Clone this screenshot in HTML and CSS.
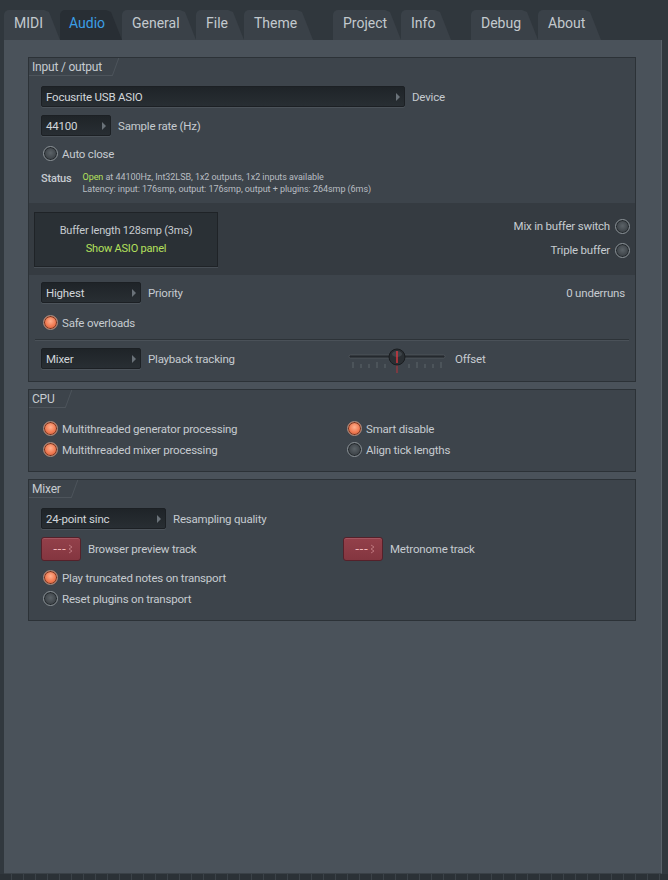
FILE: index.html
```html
<!DOCTYPE html>
<html lang="en">
<head>
  <meta charset="UTF-8" />
  <meta name="viewport" content="width=device-width, initial-scale=1.0" />
  <title>Settings - Audio</title>
  <link rel="stylesheet" href="styles.css">
</head>
<body>
  <div class="window">
    <!-- Tab bar -->
    <nav class="tabs">
      <div class="tab" style="width:56px">MIDI</div>
      <div class="tab active" style="width:62px">Audio</div>
      <div class="tab" style="width:74px">General</div>
      <div class="tab" style="width:48px">File</div>
      <div class="tab" style="width:69px">Theme</div>
      <div class="tab-gap" style="width:20px"></div>
      <div class="tab" style="width:68px">Project</div>
      <div class="tab" style="width:50px">Info</div>
      <div class="tab-gap" style="width:20px"></div>
      <div class="tab" style="width:67px">Debug</div>
      <div class="tab" style="width:63px">About</div>
    </nav>

    <main class="panel">
      <!-- Input / output -->
      <section class="group">
        <div class="group-title"><span>Input / output</span></div>
        <div class="group-body io">
          <div class="row">
            <div class="select device"><span>Focusrite USB ASIO</span><i class="arrow"></i></div>
            <span class="label">Device</span>
          </div>
          <div class="row">
            <div class="select rate"><span>44100</span><i class="arrow"></i></div>
            <span class="label">Sample rate (Hz)</span>
          </div>
          <label class="check"><i class="radio"></i>Auto close</label>
          <div class="status">
            <span class="status-label">Status</span>
            <div class="status-text">
              <div><span class="ok">Open</span> at 44100Hz, Int32LSB, 1x2 outputs, 1x2 inputs available</div>
              <div>Latency: input: 176smp, output: 176smp, output + plugins: 264smp (6ms)</div>
            </div>
          </div>
        </div>

        <div class="buffer-band">
          <div class="buffer-btn">
            <div>Buffer length 128smp (3ms)</div>
            <div class="ok">Show ASIO panel</div>
          </div>
          <div class="buffer-opts">
            <label class="check right">Mix in buffer switch<i class="radio"></i></label>
            <label class="check right">Triple buffer<i class="radio"></i></label>
          </div>
        </div>

        <div class="group-body prio">
          <div class="row">
            <div class="select short"><span>Highest</span><i class="arrow"></i></div>
            <span class="label">Priority</span>
            <span class="label push">0 underruns</span>
          </div>
          <label class="check"><i class="radio on"></i>Safe overloads</label>
          <hr class="sep">
          <div class="row">
            <div class="select short"><span>Mixer</span><i class="arrow"></i></div>
            <span class="label track-label">Playback tracking</span>
            <div class="slider">
              <svg width="98" height="26" viewBox="0 0 98 26">
                <rect x="1" y="8" width="96" height="3" rx="1.5" fill="#24292e" stroke="#5a6167" stroke-width="0.6"/>
                <g stroke="#5c646b" stroke-width="1">
                  <line x1="5" y1="15" x2="5" y2="21"/><line x1="13" y1="17" x2="13" y2="21"/>
                  <line x1="21" y1="17" x2="21" y2="21"/><line x1="29" y1="15" x2="29" y2="21"/>
                  <line x1="37" y1="17" x2="37" y2="21"/><line x1="61" y1="17" x2="61" y2="21"/>
                  <line x1="69" y1="15" x2="69" y2="21"/><line x1="77" y1="17" x2="77" y2="21"/>
                  <line x1="85" y1="17" x2="85" y2="21"/><line x1="93" y1="15" x2="93" y2="21"/>
                </g>
                <line x1="49" y1="14" x2="49" y2="26" stroke="#b8323a" stroke-width="1"/>
                <circle cx="49" cy="10" r="8" fill="#2a2f33" stroke="#1a1d20"/>
                <ellipse cx="49" cy="7" rx="5" ry="3" fill="#4c5359" opacity="0.6"/>
                <line x1="49" y1="4" x2="49" y2="16" stroke="#e0353e" stroke-width="1.4"/>
              </svg>
            </div>
            <span class="label">Offset</span>
          </div>
        </div>
      </section>

      <!-- CPU -->
      <section class="group">
        <div class="group-title"><span>CPU</span></div>
        <div class="group-body cols">
          <div class="col">
            <label class="check"><i class="radio on"></i>Multithreaded generator processing</label>
            <label class="check"><i class="radio on"></i>Multithreaded mixer processing</label>
          </div>
          <div class="col">
            <label class="check"><i class="radio on"></i>Smart disable</label>
            <label class="check"><i class="radio"></i>Align tick lengths</label>
          </div>
        </div>
      </section>

      <!-- Mixer -->
      <section class="group">
        <div class="group-title"><span>Mixer</span></div>
        <div class="group-body mix">
          <div class="row">
            <div class="select sinc"><span>24-point sinc</span><i class="arrow"></i></div>
            <span class="label">Resampling quality</span>
          </div>
          <div class="tracks">
            <div class="track">
              <div class="track-btn"><span>---</span><svg width="5" height="10" viewBox="0 0 5 10"><path d="M1 1 L4 3 L1 5 L4 7 L1 9" fill="none" stroke="#c07980" stroke-width="0.9"/></svg></div>
              <span class="label">Browser preview track</span>
            </div>
            <div class="track">
              <div class="track-btn"><span>---</span><svg width="5" height="10" viewBox="0 0 5 10"><path d="M1 1 L4 3 L1 5 L4 7 L1 9" fill="none" stroke="#c07980" stroke-width="0.9"/></svg></div>
              <span class="label">Metronome track</span>
            </div>
          </div>
          <label class="check"><i class="radio on"></i>Play truncated notes on transport</label>
          <label class="check"><i class="radio"></i>Reset plugins on transport</label>
        </div>
      </section>
    </main>
    <div class="footer"></div>
  </div>
</body>
</html>
```

FILE: styles.css
```css
:root {
  --font-main: Roboto, "Noto Sans", sans-serif;
  --text: #c6cbd0;
  --green: #b4e05c;
  --panel: #4a525a;
  --group: #3d444b;
  --group-line: #2c3237;
  --field: #252b30;
}

body {
  margin: 0;
  height: 880px;
  overflow: hidden;
  background: #31383e;
  font-family: var(--font-main);
  color: var(--text);
  letter-spacing: -0.2px;
}

.window {
  display: flex;
  flex-direction: column;
  height: 880px;
}

/* Tab bar */
.tabs {
  display: flex;
  height: 30px;
  padding: 10px 0 0 4px;
  background: #30373d;
  letter-spacing: 0;
}

.tab {
  position: relative;
  box-sizing: border-box;
  height: 30px;
  padding: 5px 0 0 10px;
  font-size: 14px;
  color: #c3c9ce;
  background: #3a4148;
  border-radius: 5px 0 0 0;
  clip-path: polygon(0 0, calc(100% - 16px) 0, calc(100% - 11px) 2px, 100% 100%, 0 100%);
}
.tab.active {
  background: #282e34;
  color: #3b9ee6;
  padding-left: 9px;
}

/* Main panel */
.panel {
  flex: 1;
  margin: 0 6px 0 4px;
  padding: 17px 25px 0 24px;
  background: var(--panel);
  border-right: 1px solid #5a626a;
  border-bottom: 1px solid #3a4147;
  display: flex;
  flex-direction: column;
  gap: 7px;
}

.footer {
  height: 6px;
  background: repeating-linear-gradient(90deg, #2b3136 0 11px, #3b4248 11px 12px);
}

/* Groups */
.group {
  background: var(--group);
  border: 1px solid var(--group-line);
}

.group-title {
  display: flex;
  height: 18px;
}
.group-title span {
  position: relative;
  font-size: 12px;
  line-height: 18px;
  padding: 0 10px 0 3px;
  border-bottom: 1px solid #4d545b;
}
.group-title span::after {
  content: "";
  position: absolute;
  right: -4px;
  top: 0;
  height: 18px;
  border-right: 1px solid #4d545b;
  transform: skewX(-20deg);
}

.group-body {
  padding: 0 12px;
}

.row {
  display: flex;
  align-items: center;
  gap: 7px;
}

.label {
  font-size: 11.5px;
}
.push {
  margin-left: auto;
  margin-right: -2px;
}

/* Dropdown fields */
.select {
  box-sizing: border-box;
  height: 21px;
  display: flex;
  align-items: center;
  justify-content: space-between;
  padding: 0 4px 0 4px;
  background: linear-gradient(#1f2428, #282e33);
  border: 1px solid #1c2024;
  border-radius: 2px;
  box-shadow: 0 1px 0 #4c535a;
  font-size: 11.5px;
  color: #d2d6da;
}
.arrow {
  width: 0;
  height: 0;
  border-left: 4px solid #6a7279;
  border-top: 4px solid transparent;
  border-bottom: 4px solid transparent;
}
.device { width: 364px; }
.rate { width: 70px; }
.short { width: 100px; }
.sinc { width: 125px; }

/* Radio style toggles */
.check {
  display: flex;
  align-items: center;
  gap: 4px;
  font-size: 11.5px;
  height: 21px;
}
.check.right {
  justify-content: flex-end;
  gap: 3px;
}
.radio {
  box-sizing: border-box;
  width: 15px;
  height: 15px;
  border-radius: 50%;
  margin-left: 2px;
  background: radial-gradient(circle at 50% 45%, #5c6368 0, #41474c 55%, #2b3034 100%);
  border: 1px solid #8b9297;
  box-shadow: inset 0 0 0 1px #24292d;
}
.radio.on {
  background: radial-gradient(circle at 50% 40%, #ffb08e 0, #f07a52 50%, #c2512f 100%);
  border-color: #a98d82;
  box-shadow: inset 0 0 0 1px #6e3421;
}

/* Input / output */
.io {
  padding-top: 10px;
  padding-bottom: 8px;
  display: flex;
  flex-direction: column;
  gap: 8px;
}
.io .check { margin-top: -1px; }
.status {
  display: flex;
  gap: 11px;
  align-items: flex-start;
  margin-top: -1px;
}
.status-label {
  font-size: 11px;
  font-weight: 500;
  margin-top: 1px;
}
.status-text {
  font-size: 9px;
  line-height: 12px;
  color: #b8bdc2;
  letter-spacing: -0.05px;
}
.ok { color: var(--green); }

.buffer-band {
  display: flex;
  justify-content: space-between;
  align-items: center;
  height: 72px;
  padding: 0 5px 0 5px;
  background: #353b41;
}
.buffer-btn {
  box-sizing: border-box;
  width: 184px;
  height: 55px;
  display: flex;
  flex-direction: column;
  align-items: center;
  justify-content: center;
  gap: 5px;
  font-size: 11px;
  background: #2a3035;
  border: 1px solid #1f2327;
  box-shadow: 0 1px 0 #474e55;
}
.buffer-opts {
  display: flex;
  flex-direction: column;
  gap: 3px;
  margin-bottom: 2px;
}

.prio {
  padding-top: 7px;
  padding-bottom: 12px;
  display: flex;
  flex-direction: column;
  gap: 0;
}
.prio .check {
  margin: 9px 0 6px;
}
.sep {
  border: none;
  border-top: 1px solid #2d3338;
  border-bottom: 1px solid #4a5158;
  margin: 0 -6px 7px -6px;
}
.track-label { width: 100px; }
.slider {
  display: flex;
  align-self: flex-start;
  margin: -1px 2px -4px 93px;
  height: 26px;
}

/* CPU */
.cols {
  display: grid;
  grid-template-columns: 304px 1fr;
  padding-top: 10px;
  padding-bottom: 11px;
}

/* Mixer */
.mix {
  padding-top: 10px;
  padding-bottom: 11px;
  display: flex;
  flex-direction: column;
}
.tracks {
  display: grid;
  grid-template-columns: 302px 1fr;
  margin-top: 8px;
  margin-bottom: 6px;
}
.track {
  display: flex;
  align-items: center;
  gap: 7px;
}
.track-btn {
  box-sizing: border-box;
  width: 40px;
  height: 24px;
  display: flex;
  align-items: center;
  justify-content: center;
  gap: 2px;
  padding-left: 4px;
  color: #f0b4b8;
  background: linear-gradient(#93404a, #843640);
  border: 1px solid #55212a;
  border-radius: 3px;
  box-shadow: inset 0 1px 0 #a35560;
}
.track-btn span {
  font-family: "DejaVu Sans", sans-serif;
  font-size: 12px;
  letter-spacing: 0;
}
```
